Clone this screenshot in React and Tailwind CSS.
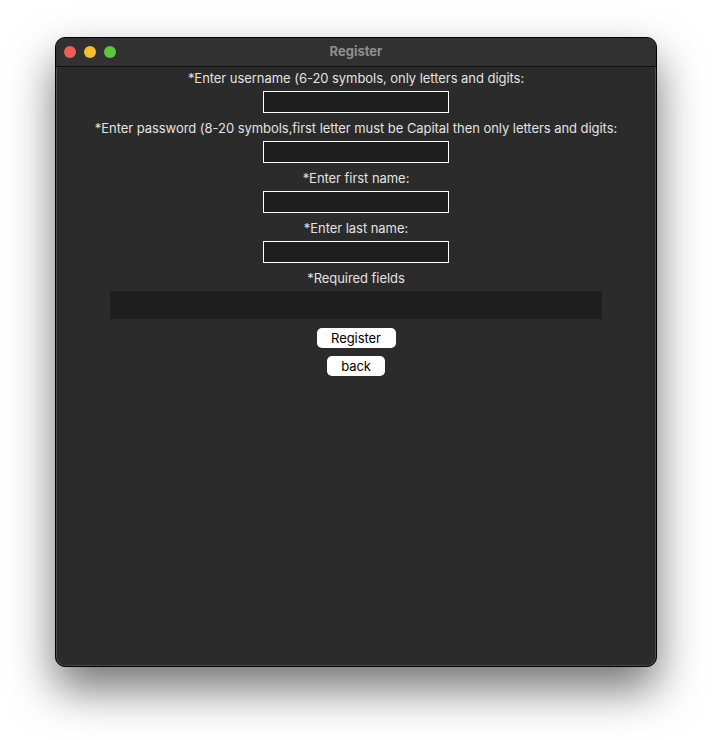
const FIELDS = [
  '*Enter username (6-20 symbols, only letters and digits:',
  '*Enter password (8-20 symbols,first letter must be Capital then only letters and digits:',
  '*Enter first name:',
  '*Enter last name:',
]

export default function App() {
  return (
    <div className="w-[712px] h-[740px] bg-white pt-[37px] pl-[55px] overflow-hidden" style={{ fontFamily: 'Inter, "Noto Sans", sans-serif' }}>
      <div className="w-[602px] h-[630px] rounded-[10px] border border-black bg-[#2b2b2b] shadow-[0_22px_45px_rgba(0,0,0,0.55),inset_0_0_0_1px_#4a4a4a] flex flex-col overflow-hidden">
        {/* Title bar */}
        <div className="relative h-[29px] shrink-0 bg-[#313131] border-b border-[#111] flex items-center justify-center">
          <div className="absolute left-[8px] top-[8px] flex gap-[8px]">
            <span className="w-[12px] h-[12px] rounded-full bg-[#ed5f56]" />
            <span className="w-[12px] h-[12px] rounded-full bg-[#f5bd30]" />
            <span className="w-[12px] h-[12px] rounded-full bg-[#5ac73f]" />
          </div>
          <span className="text-[13px] font-bold text-[#8e8e8e]">Register</span>
        </div>

        {/* Form */}
        <div className="flex flex-col items-center pt-[2px] text-[13px] text-[#e2e2e2] tracking-[-0.05px]">
          {FIELDS.map((label) => (
            <div key={label} className="flex flex-col items-center mb-[6px]">
              <p className="leading-[18px] mb-[4px] whitespace-nowrap">{label}</p>
              <div className="w-[186px] h-[22px] border border-white bg-[#1e1e1e]" />
            </div>
          ))}
          <p className="leading-[18px] mb-[4px]">*Required fields</p>
          <div className="w-[492px] h-[28px] bg-[#1e1e1e]" />
          <button className="mt-[9px] w-[79px] h-[20px] rounded-[5px] bg-white text-black text-[13px] leading-none">Register</button>
          <button className="mt-[8px] w-[58px] h-[20px] rounded-[5px] bg-white text-black text-[13px] leading-none">back</button>
        </div>
      </div>
    </div>
  )
}
